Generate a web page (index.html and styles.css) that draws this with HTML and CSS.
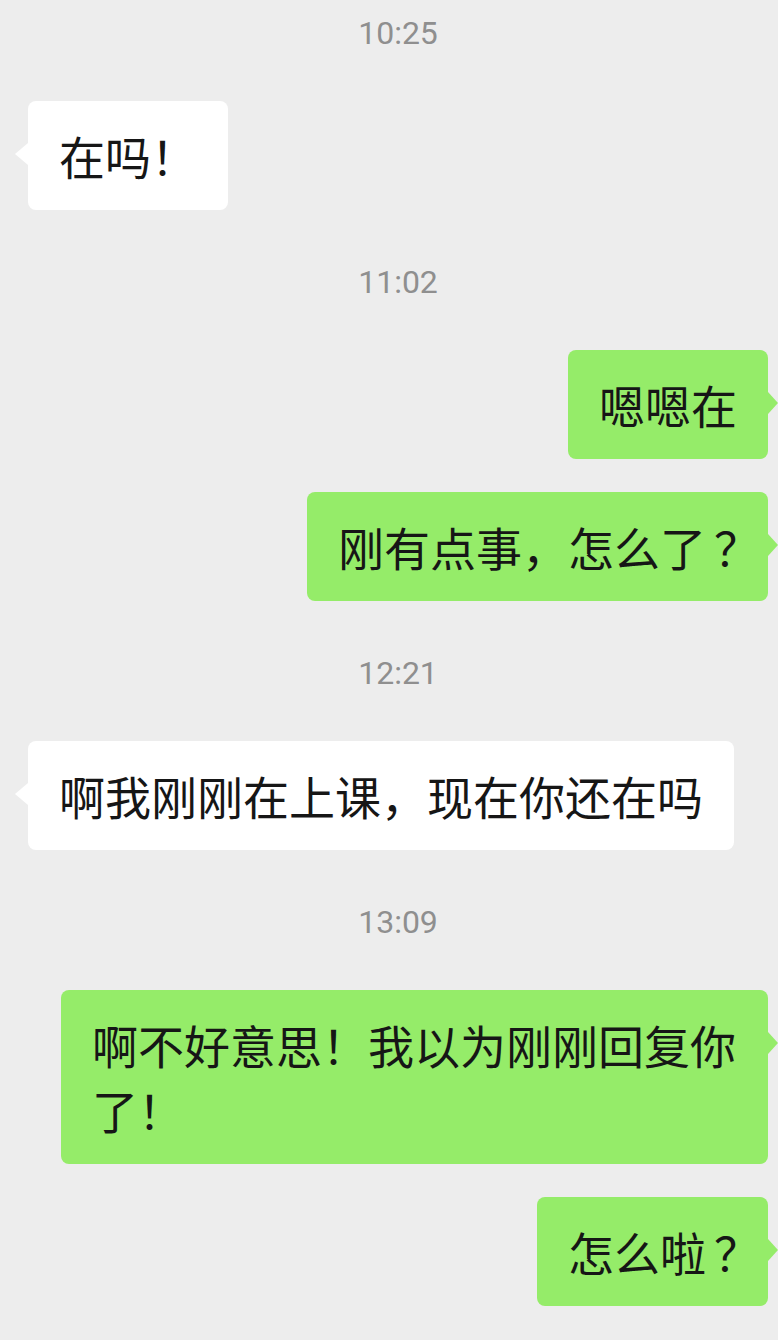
FILE: index.html
```html
<!DOCTYPE html>
<html lang="zh-CN">
<head>
<meta charset="utf-8">
<title>聊天</title>
<link rel="stylesheet" href="styles.css">
</head>
<body>
<main class="chat">
  <div class="time">10:25</div>
  <div class="msg msg-left"><div class="bubble bubble-white">在吗！</div></div>

  <div class="time">11:02</div>
  <div class="msg msg-right"><div class="bubble bubble-green">嗯嗯在</div></div>
  <div class="msg msg-right"><div class="bubble bubble-green">刚有点事，怎么了<span class="q">？</span></div></div>

  <div class="time">12:21</div>
  <div class="msg msg-left"><div class="bubble bubble-white">啊我刚刚在上课，现在你还在吗</div></div>

  <div class="time">13:09</div>
  <div class="msg msg-right"><div class="bubble bubble-green">啊不好意思！我以为刚刚回复你了！</div></div>
  <div class="msg msg-right"><div class="bubble bubble-green">怎么啦<span class="q">？</span></div></div>
</main>
</body>
</html>
```
FILE: styles.css
```css
* { box-sizing: border-box; }

html, body {
  margin: 0;
  padding: 0;
  background: #ededed;
}

body {
  width: 778px;
  height: 1340px;
  overflow: hidden;
  font-family: "Noto Sans CJK SC", "Noto Sans", sans-serif;
}

.chat {
  display: flex;
  flex-direction: column;
}

.time {
  margin: 52px 0 48px;
  padding-left: 18px;
  height: 40px;
  line-height: 40px;
  text-align: center;
  font-family: Roboto, "Noto Sans", sans-serif;
  font-size: 32px;
  color: #8f8f8f;
}

.time:first-child {
  margin-top: 13px;
}

.msg {
  display: flex;
}

.msg + .msg {
  margin-top: 33px;
}

.msg-left {
  justify-content: flex-start;
  padding-left: 28px;
}

.msg-right {
  justify-content: flex-end;
  padding-right: 10px;
}

.bubble {
  position: relative;
  max-width: 707px;
  padding: 22px 31px;
  border-radius: 8px;
  font-size: 46px;
  line-height: 65px;
  color: #161616;
  word-break: break-all;
}

.bubble-white {
  background: #ffffff;
}

.bubble-green {
  background: #95ec69;
}

.bubble::before {
  content: "";
  position: absolute;
  top: 42px;
  width: 0;
  height: 0;
  border-top: 11px solid transparent;
  border-bottom: 11px solid transparent;
}

.bubble-white::before {
  left: -13px;
  border-right: 13px solid #ffffff;
}

.bubble-green::before {
  right: -10px;
  border-left: 10px solid #95ec69;
}

.q {
  padding-left: 8px;
  font-feature-settings: "palt" 1;
}
```
